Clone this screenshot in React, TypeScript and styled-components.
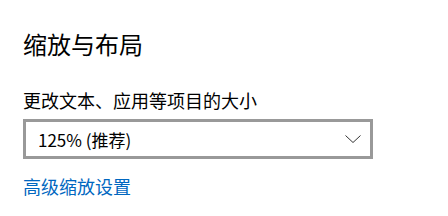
import * as React from 'react';
import styled, { createGlobalStyle } from 'styled-components';

const GlobalStyle = createGlobalStyle`
  html, body {
    margin: 0;
    padding: 0;
    background: #ffffff;
  }
  body {
    font-family: "Segoe UI", "Noto Sans CJK SC", sans-serif;
    color: #000000;
  }
`;

const Page = styled.div`
  width: 448px;
  height: 216px;
  box-sizing: border-box;
  padding: 28px 0 0 23px;
  display: flex;
  flex-direction: column;
  align-items: flex-start;
`;

const Title = styled.h1`
  margin: 0;
  font-size: 24px;
  font-weight: 400;
  line-height: 32px;
`;

const Label = styled.div`
  margin-top: 27px;
  font-size: 18px;
  line-height: 26px;
`;

const Select = styled.div`
  margin-top: 6px;
  width: 350px;
  height: 40px;
  box-sizing: border-box;
  border: 3px solid #999999;
  display: flex;
  align-items: center;
  justify-content: space-between;
  padding: 0 9px 0 12px;
  font-size: 17px;
`;

const Chevron = styled.svg`
  width: 16px;
  height: 8px;
`;

const Link = styled.a`
  margin-top: 14px;
  font-size: 18px;
  line-height: 26px;
  color: #0067c0;
  text-decoration: none;
`;

export default function App() {
  return (
    <Page>
      <GlobalStyle />
      <Title>缩放与布局</Title>
      <Label>更改文本、应用等项目的大小</Label>
      <Select>
        <span>125% (推荐)</span>
        <Chevron viewBox="0 0 16 8">
          <path d="M0.5 0.5 L8 7.5 L15.5 0.5" fill="none" stroke="#333333" strokeWidth="1" />
        </Chevron>
      </Select>
      <Link href="#">高级缩放设置</Link>
    </Page>
  );
}
